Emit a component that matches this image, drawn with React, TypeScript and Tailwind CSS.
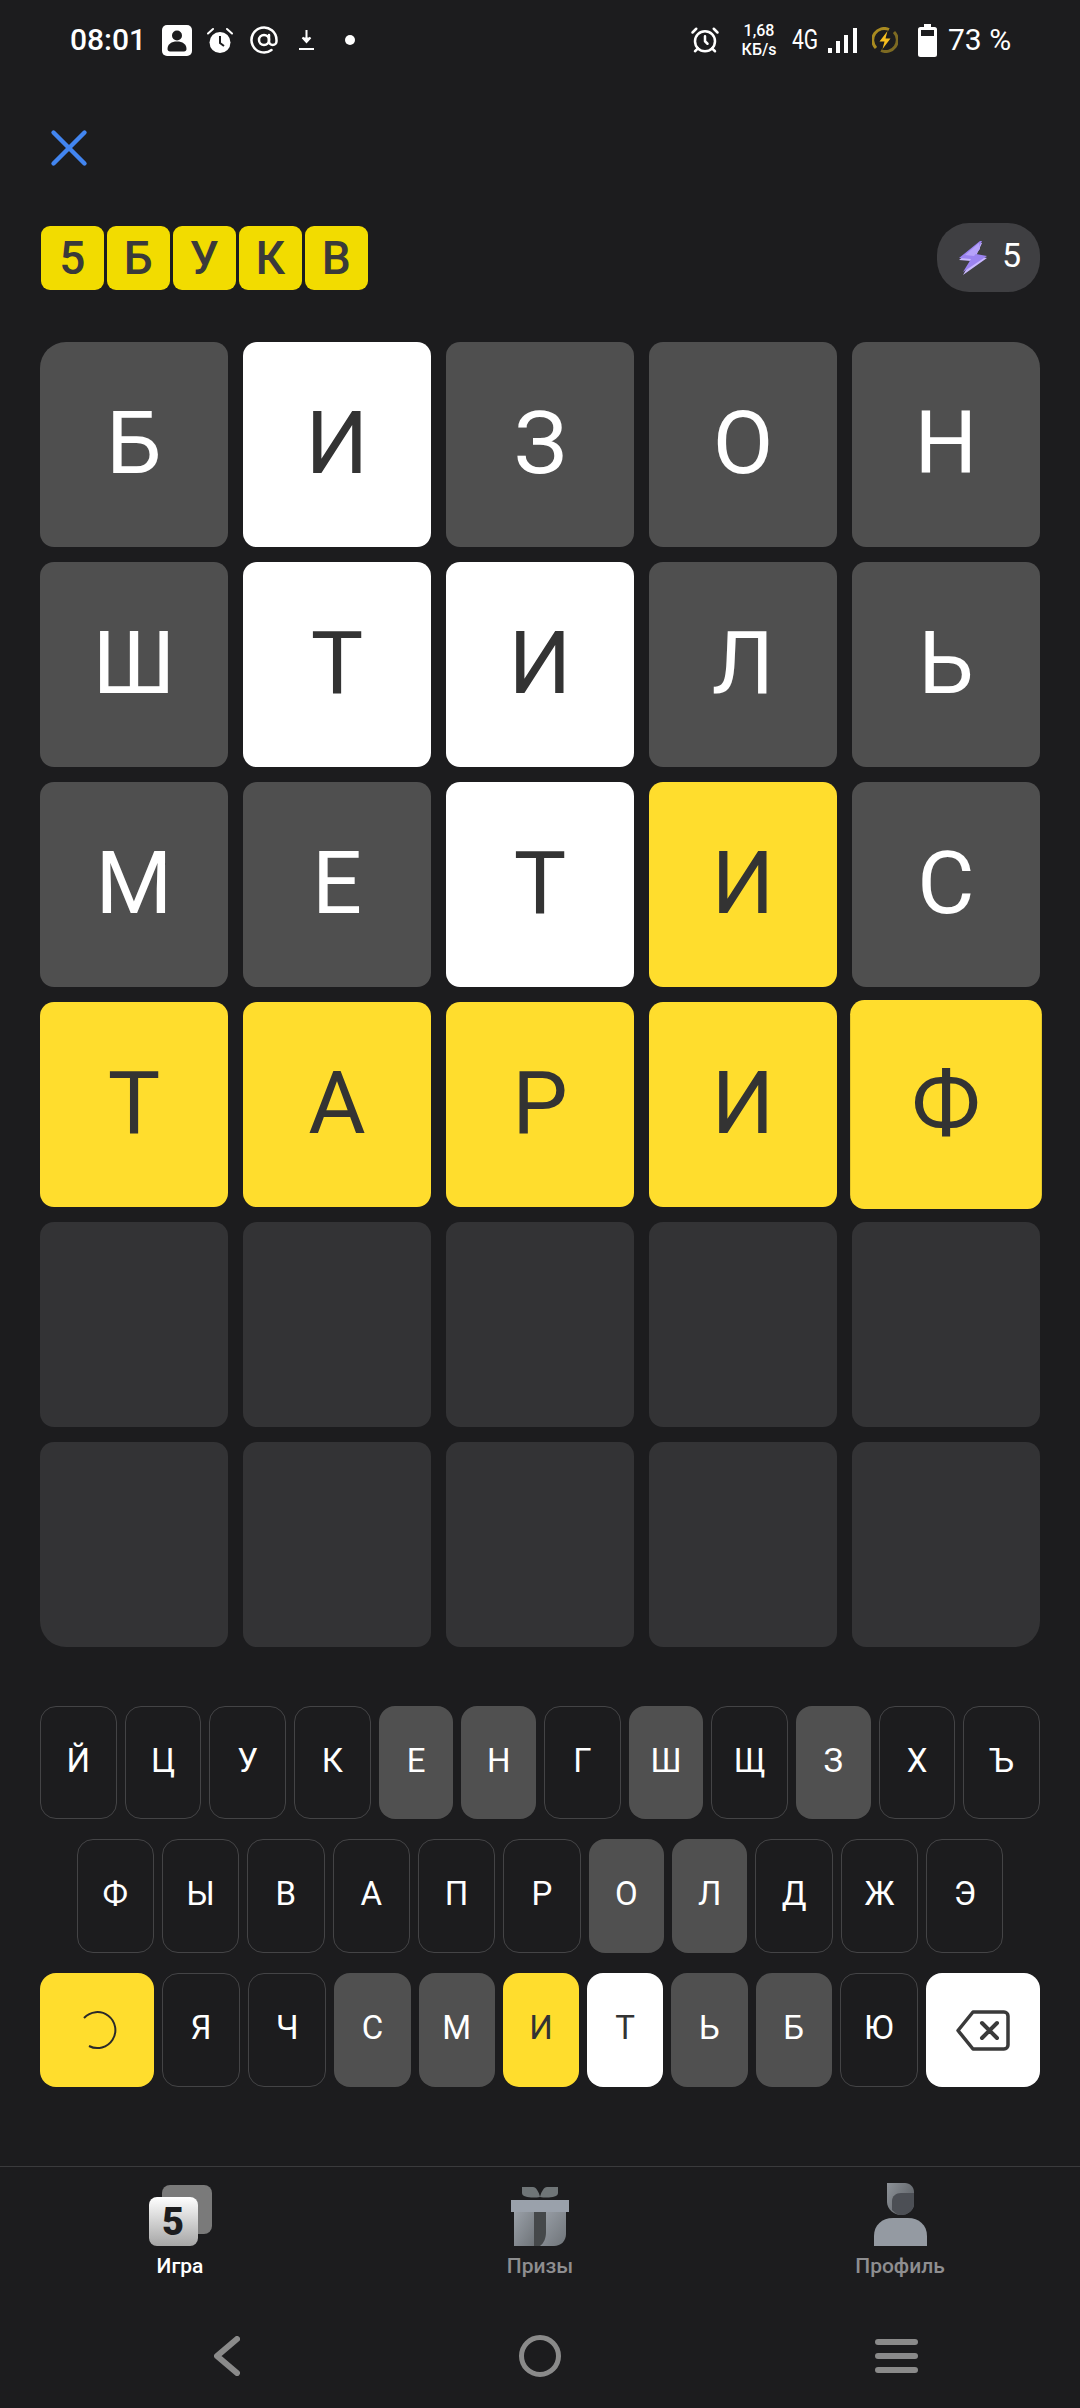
import React from 'react'
import { AlarmClock, AtSign, X } from 'lucide-react'

type TileKind = 'gray' | 'white' | 'yellow' | 'empty'
type KeyKind = 'idle' | 'gray' | 'white' | 'yellow'

interface TileData {
  letter?: string
  kind: TileKind
  corner?: string
}

const tileStyle: Record<TileKind, string> = {
  gray: 'bg-[#4f4f4f] text-white',
  white: 'bg-white text-[#333333]',
  yellow: 'bg-[#ffdd2d] text-[#333333]',
  empty: 'bg-[#333335]',
}

const keyStyle: Record<KeyKind, string> = {
  idle: 'border-[1.5px] border-[#444446] text-white',
  gray: 'bg-[#505050] text-white',
  white: 'bg-white text-[#333333]',
  yellow: 'bg-[#ffdd2d] text-[#333333]',
}

const rows: TileData[][] = [
  [
    { letter: 'Б', kind: 'gray', corner: 'rounded-tl-[26px]' },
    { letter: 'И', kind: 'white' },
    { letter: 'З', kind: 'gray' },
    { letter: 'О', kind: 'gray' },
    { letter: 'Н', kind: 'gray', corner: 'rounded-tr-[26px]' },
  ],
  [
    { letter: 'Ш', kind: 'gray' },
    { letter: 'Т', kind: 'white' },
    { letter: 'И', kind: 'white' },
    { letter: 'Л', kind: 'gray' },
    { letter: 'Ь', kind: 'gray' },
  ],
  [
    { letter: 'М', kind: 'gray' },
    { letter: 'Е', kind: 'gray' },
    { letter: 'Т', kind: 'white' },
    { letter: 'И', kind: 'yellow' },
    { letter: 'С', kind: 'gray' },
  ],
  [
    { letter: 'Т', kind: 'yellow' },
    { letter: 'А', kind: 'yellow' },
    { letter: 'Р', kind: 'yellow' },
    { letter: 'И', kind: 'yellow' },
    { letter: 'Ф', kind: 'yellow', corner: 'scale-[1.02]' },
  ],
  [
    { kind: 'empty' },
    { kind: 'empty' },
    { kind: 'empty' },
    { kind: 'empty' },
    { kind: 'empty' },
  ],
  [
    { kind: 'empty', corner: 'rounded-bl-[26px]' },
    { kind: 'empty' },
    { kind: 'empty' },
    { kind: 'empty' },
    { kind: 'empty', corner: 'rounded-br-[26px]' },
  ],
]

const keysTop: [string, KeyKind][] = [
  ['Й', 'idle'], ['Ц', 'idle'], ['У', 'idle'], ['К', 'idle'], ['Е', 'gray'], ['Н', 'gray'],
  ['Г', 'idle'], ['Ш', 'gray'], ['Щ', 'idle'], ['З', 'gray'], ['Х', 'idle'], ['Ъ', 'idle'],
]
const keysMiddle: [string, KeyKind][] = [
  ['Ф', 'idle'], ['Ы', 'idle'], ['В', 'idle'], ['А', 'idle'], ['П', 'idle'], ['Р', 'idle'],
  ['О', 'gray'], ['Л', 'gray'], ['Д', 'idle'], ['Ж', 'idle'], ['Э', 'idle'],
]
const keysBottom: [string, KeyKind][] = [
  ['Я', 'idle'], ['Ч', 'idle'], ['С', 'gray'], ['М', 'gray'], ['И', 'yellow'],
  ['Т', 'white'], ['Ь', 'gray'], ['Б', 'gray'], ['Ю', 'idle'],
]

function Key({ label, kind }: { label: string; kind: KeyKind }): React.JSX.Element {
  return (
    <div className={`flex-1 h-full rounded-[16px] flex items-center justify-center text-[33px] pb-[4px] ${keyStyle[kind]}`}>
      {label}
    </div>
  )
}

function StatusBar(): React.JSX.Element {
  return (
    <div className="h-[80px] pl-[70px] pr-[71px] flex items-center justify-between text-white">
      <div className="flex items-center">
        <span className="text-[30px] leading-none font-medium w-[71px] mr-[21px] whitespace-nowrap">08:01</span>
        <svg viewBox="0 0 30 31" className="w-[30px] h-[31px] mr-[15px]">
          <rect width="30" height="31" rx="5" fill="#fff" />
          <circle cx="15" cy="10.5" r="5" fill="#1c1c1e" />
          <path d="M5.5 24c0-5 4-7.5 9.5-7.5s9.5 2.500 9.500 7.500c0 1.500-1 2.500-2.500 2.500H8c-1.500 0-2.500-1-2.500-2.500z" fill="#1c1c1e" />
        </svg>
        <svg viewBox="0 0 26 27" className="w-[26px] h-[27px] mr-[16px]">
          <circle cx="13" cy="15.500" r="10.500" fill="#fff" />
          <path d="M13 9v7l4 3" fill="none" stroke="#1c1c1e" strokeWidth="2" />
          <path d="M1 6.500 6 2M25 6.500 20 2" stroke="#fff" strokeWidth="2" strokeLinecap="round" />
        </svg>
        <AtSign size={30} strokeWidth={2} className="mr-[20px]" />
        <svg viewBox="0 0 15 20" className="w-[15px] h-[20px] mr-[31px]">
          <path d="M7.500 0v11M3.500 7.500 7.500 12l4-4.500" fill="#fff" stroke="#fff" strokeWidth="2" />
          <path d="M0 19h15" stroke="#fff" strokeWidth="2" />
        </svg>
        <div className="w-[10px] h-[10px] rounded-full bg-white" />
      </div>
      <div className="flex items-center">
        <AlarmClock size={30} strokeWidth={2} className="mr-[20px]" />
        <div className="w-[38px] mr-[14px] flex flex-col items-center font-medium text-[16px] leading-[19px]">
          <span>1,68</span>
          <span>КБ/s</span>
        </div>
        <span className="w-[26px] mr-[10px] text-[28px] leading-none scale-x-75 flex justify-center">4G</span>
        <svg viewBox="0 0 29 25" className="w-[29px] h-[25px] mr-[15px]">
          <rect x="0" y="20" width="4" height="5" fill="#fff" />
          <rect x="8" y="13" width="4" height="12" fill="#fff" />
          <rect x="16" y="7" width="4" height="18" fill="#fff" />
          <rect x="25" y="0" width="4" height="25" fill="#fff" />
        </svg>
        <svg viewBox="0 0 26 26" className="w-[26px] h-[26px] mr-[20px]">
          <path d="M4 21A11.500 11.500 0 0 1 17 2.500" fill="none" stroke="#a88a20" strokeWidth="3" />
          <path d="M22 5A11.500 11.500 0 0 1 9 23.500" fill="none" stroke="#7d6a22" strokeWidth="3" />
          <path d="M15.500 4 7.500 14.500h5l-2 7.500 8-10.500h-5z" fill="#f5bd1f" />
        </svg>
        <svg viewBox="0 0 19 33" className="w-[19px] h-[33px] mr-[11px]">
          <path d="M6 0h7v3h3.500A2.500 2.500 0 0 1 19 5.500v25a2.500 2.500 0 0 1-2.500 2.500h-14A2.500 2.500 0 0 1 0 30.500v-25A2.500 2.500 0 0 1 2.500 3H6z" fill="#fff" />
          <rect x="3" y="6" width="13" height="6" fill="#1c1c1e" />
        </svg>
        <span className="text-[30px] leading-none w-[61px] whitespace-nowrap">73 %</span>
      </div>
    </div>
  )
}

function Logo(): React.JSX.Element {
  return (
    <div className="flex gap-[3.500px] ml-[1px]">
      {['5', 'Б', 'У', 'К', 'В'].map((letter, i) => (
        <div
          key={i}
          className="w-[62.500px] h-[64px] rounded-[9px] bg-[#f2dc00] text-[#3a3a3a] flex items-center justify-center text-[46px] font-medium leading-none">
          {letter}
        </div>
      ))}
    </div>
  )
}

function Board(): React.JSX.Element {
  return (
    <div className="mt-[50px] mx-[40px] flex flex-col gap-[15px]">
      {rows.map((row, r) => (
        <div key={r} className="flex gap-[15px] h-[205px]">
          {row.map((tile, c) => (
            <div
              key={c}
              className={`flex-1 rounded-[14px] flex items-center justify-center text-[88px] font-normal leading-none pb-[4px] ${tileStyle[tile.kind]} ${tile.corner ?? ''}`}>
              {tile.letter}
            </div>
          ))}
        </div>
      ))}
    </div>
  )
}

function Keyboard(): React.JSX.Element {
  return (
    <div className="mt-[59px] mx-[40px] flex flex-col gap-[20px]">
      <div className="flex gap-[8px] h-[113px]">
        {keysTop.map(([label, kind]) => <Key key={label} label={label} kind={kind} />)}
      </div>
      <div className="flex gap-[8px] h-[114px] px-[36.500px]">
        {keysMiddle.map(([label, kind]) => <Key key={label} label={label} kind={kind} />)}
      </div>
      <div className="flex gap-[8px] h-[114px]">
        <div className="w-[114px] shrink-0 h-full rounded-[16px] bg-[#ffdd2d] flex items-center justify-center">
          <svg viewBox="0 0 40 40" className="w-[40px] h-[40px]">
            <path d="M7 8A18 18 0 1 1 12 36" fill="none" stroke="#2a2a2a" strokeWidth="2" />
          </svg>
        </div>
        {keysBottom.map(([label, kind]) => <Key key={label} label={label} kind={kind} />)}
        <div className="w-[114px] shrink-0 h-full rounded-[16px] bg-white flex items-center justify-center">
          <svg viewBox="0 0 54 41" className="w-[54px] h-[41px]">
            <path d="M17 2h31a4 4 0 0 1 4 4v29a4 4 0 0 1-4 4H17L2 20.500z" fill="none" stroke="#3a3a3a" strokeWidth="3.500" strokeLinejoin="round" />
            <path d="M26 13l15 15M41 13 26 28" stroke="#3a3a3a" strokeWidth="4" strokeLinecap="round" />
          </svg>
        </div>
      </div>
    </div>
  )
}

function TabBar(): React.JSX.Element {
  return (
    <div className="mt-[79px] border-t border-[#3a3a3c] h-[146px] grid grid-cols-3 text-[21px] font-medium text-[#8e8e90]">
      <div className="flex flex-col items-center pt-[18px]">
        <div className="relative w-[63px] h-[61px]">
          <div className="absolute right-0 top-0 w-[50px] h-[49px] rounded-[8px] bg-[#7a7a7a]" />
          <div className="absolute left-0 bottom-0 w-[49px] h-[49px] rounded-[8px] bg-linear-to-b from-white to-[#a6a6a6] flex items-center justify-center text-[#1c1c1e] text-[38px] font-black leading-none">
            5
          </div>
        </div>
        <span className="mt-[8px] leading-[24px] text-white">Игра</span>
      </div>
      <div className="flex flex-col items-center pt-[18px]">
        <svg viewBox="0 0 58 61" className="w-[58px] h-[61px]">
          <defs>
            <linearGradient id="gift" x1="0" y1="0" x2="1" y2="1">
              <stop offset="0" stopColor="#9aa0a8" />
              <stop offset="1" stopColor="#6f7479" />
            </linearGradient>
          </defs>
          <path d="M11 2h11c3 0 6 5 7 10-6 1-18 1-18-4z" fill="#6f7577" />
          <path d="M47 2H36c-3 0-6 5-7 10 6 1 18 1 18-4z" fill="#6f7577" />
          <rect x="0" y="15" width="58" height="12" fill="#9aa1ab" />
          <rect x="3" y="27" width="20" height="34" fill="url(#gift)" />
          <rect x="23" y="27" width="12" height="34" fill="#45484a" />
          <path d="M35 27h20v22c0 7-5 12-12 12H29c4-3 6-8 6-14z" fill="url(#gift)" />
        </svg>
        <span className="mt-[8px] leading-[24px]">Призы</span>
      </div>
      <div className="flex flex-col items-center pt-[16px]">
        <svg viewBox="0 0 53 63" className="w-[53px] h-[63px]">
          <defs>
            <linearGradient id="hair" x1="0" y1="0" x2="1" y2="0.600">
              <stop offset="0" stopColor="#8d9298" />
              <stop offset="1" stopColor="#5f6368" />
            </linearGradient>
          </defs>
          <path d="M13 0h18c5 0 9 4 9 9v12c0 6-6 11-13 11s-14-6-14-13z" fill="url(#hair)" />
          <path d="M18 18c0-5 4-8 9-8h13v11c0 6-6 11-13 11-3 0-5-1-9-5z" fill="#4c4f55" />
          <path d="M0 63V53c0-11 8-18 19-18h15c11 0 19 7 19 18v10z" fill="#949aa2" />
        </svg>
        <span className="mt-[8px] leading-[24px]">Профиль</span>
      </div>
    </div>
  )
}

function SystemNav(): React.JSX.Element {
  return (
    <div className="h-[96px] grid grid-cols-3 items-center pb-[8px]">
      <div className="flex justify-center">
        <svg viewBox="0 0 26 40" className="w-[26px] h-[40px] ml-[94px]">
          <path d="M23 3 3 20l20 17" fill="none" stroke="#8a8a8a" strokeWidth="6" strokeLinecap="round" strokeLinejoin="round" />
        </svg>
      </div>
      <div className="flex justify-center">
        <div className="w-[42px] h-[42px] rounded-full border-[5px] border-[#8a8a8a]" />
      </div>
      <div className="flex justify-center">
        <div className="w-[43px] flex flex-col gap-[8px] ml-[-8px]">
          <div className="h-[6px] rounded-full bg-[#8a8a8a]" />
          <div className="h-[6px] rounded-full bg-[#8a8a8a]" />
          <div className="h-[6px] rounded-full bg-[#8a8a8a]" />
        </div>
      </div>
    </div>
  )
}

export default function App(): React.JSX.Element {
  return (
    <div className="w-[1080px] h-[2408px] overflow-hidden bg-[#1c1c1e] font-['Roboto',sans-serif]">
      <StatusBar />
      <div className="pl-[38px] pt-[37px] h-[90px] text-[#4285f0]">
        <X size={62} strokeWidth={1.700} />
      </div>
      <div className="mt-[53px] px-[40px] h-[69px] flex items-center justify-between">
        <Logo />
        <div className="w-[103px] h-[69px] rounded-[32px] bg-[#3f3f42] flex items-center pl-[22px] gap-[15px] text-white text-[34px]">
          <svg viewBox="0 0 28 34" className="w-[28px] h-[34px]">
            <path d="M21 2 0 19l12 1-8 14 24-17-11-2 6-13z" fill="#c9b8ff" />
            <path d="M21 0 0 17l12 1-8 13 24-16-11-2 6-13z" fill="#9b83f0" />
            <path d="M20 2 6 14l9 1 6-7z" fill="#b6a2fa" />
          </svg>
          <span className="leading-none pb-[6px]">5</span>
        </div>
      </div>
      <Board />
      <Keyboard />
      <TabBar />
      <SystemNav />
    </div>
  )
}
